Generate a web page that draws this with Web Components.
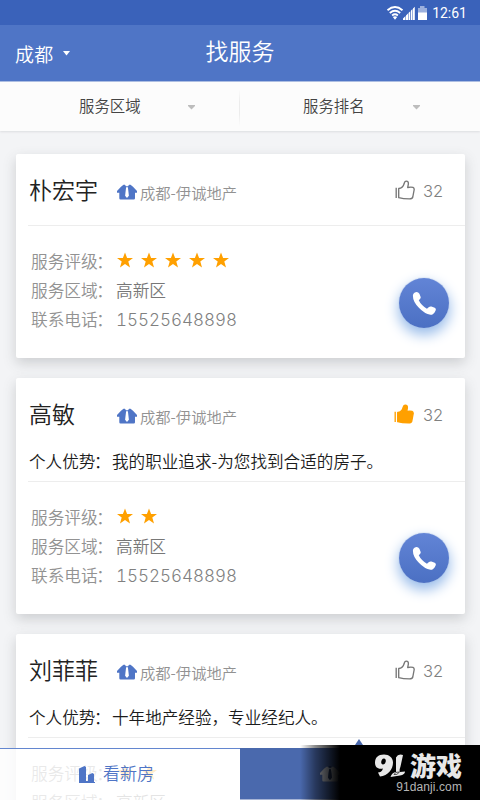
<!DOCTYPE html>
<html lang="zh-CN"><head><meta charset="utf-8"><title>找服务</title>
<style>
html,body{margin:0;height:800px;overflow:hidden}
body{font-family:"Noto Sans CJK SC",sans-serif;font-weight:350;background:#f3f4f6}
</style></head><body>
<service-app></service-app>
<script>
const define=(name,html)=>{const t=document.createElement('template');t.innerHTML=html;
customElements.define(name,class extends HTMLElement{constructor(){super();this.attachShadow({mode:'open'}).append(t.content.cloneNode(true));}});};

define('status-bar',`<style>:host{display:flex;height:25px;background:#3a62ba;color:#fff;align-items:center;justify-content:flex-end;padding-right:13px;font:400 14px/25px Roboto,sans-serif;box-sizing:border-box}svg{margin-right:5px}span{padding-top:2px}</style>
<svg width="41" height="16" viewBox="0 0 41 16"><g fill="none" stroke="#fff" stroke-width="1.900"><path d="M1.500 5.200Q9 -1 16.500 5.200"/><path d="M3.800 7.900Q9 3.700 14.200 7.900"/><path d="M6.100 10.400Q9 8.200 11.900 10.400"/></g><path d="M6.800 12Q9 10.500 11.200 12L9 14.700Z" fill="#fff"/><path d="M17 15V13.500L19.500 11V15ZM20 15V10.500L22 8.500V15ZM22.500 15V8L24.300 6.200V15ZM25 15V5.500L26.500 4V15ZM27 15V3.500L28.800 1.700V15Z" fill="#fff"/><path d="M32 3h2V1h4.500v2h2.500v12h-9z" fill="#9cb0dd"/><path d="M32 7.500h9v7.500h-9z" fill="#fff"/></svg><span>12:61</span>`);

define('title-bar',`<style>:host{display:grid;grid-template-columns:1fr 1fr 1fr;height:57px;background:#4f75c6;color:#fff;border-bottom:1px solid #a9bce2;box-sizing:border-box}
.c{display:flex;align-items:center;padding-left:15px;font-size:19px;letter-spacing:.2px;gap:10px}.t{font-size:23px;text-align:center;line-height:50px}</style>
<div class="c"><slot name="city"></slot><svg width="7" height="5"><path d="M0 0H7L3.500 4.500Z" fill="#fff"/></svg></div><div class="t"><slot></slot></div>`);

define('filter-item',`<style>:host{display:flex;align-items:center;justify-content:space-between;padding:0 44px 4px 79px;font-size:15.400px;color:#444}svg{margin-top:5px}</style><slot></slot><svg width="7" height="5"><path d="M0 0H7V1L3.500 4.500L0 1Z" fill="#bdbdbd"/></svg>`);
define('filter-bar',`<style>:host{display:grid;grid-template-columns:239px 1px 224px;height:49px;background:#fcfcfc;box-shadow:0 1px 2px #dcdde0}i{background:linear-gradient(#fcfcfc 15%,#ececec 40%,#ececec 65%,#fcfcfc 90%)}.b{padding-left:63px;padding-right:44px}</style><filter-item>服务区域</filter-item><i></i><filter-item class="b">服务排名</filter-item>`);

define('agency-icon',`<style>:host{display:block;width:20px;height:16px;color:#4f75c6}svg{display:block}path+path{fill:var(--tie,none)}</style><svg width="20" height="16" viewBox="0 0 20 16"><path fill-rule="evenodd" d="M6.500 .8H7.900L9 2.200H11L12.100 .8H13.500L16 2.800 20 7V8.800H18V14.300Q18 15.500 16.800 15.500H3.500Q2.300 15.500 2.300 14.300V8.800H0V7L4 2.800ZM9.100 3.200L8.100 11.700 10 13.900 11.900 11.700 10.900 3.200Z" fill="currentColor"/><path d="M9.100 3.200L8.100 11.700 10 13.900 11.900 11.700 10.900 3.200ZM8.600 .3H11.400L10.800 1.600H9.200Z"/></svg>`);
define('like-icon',`<style>:host{display:block;width:20px;height:20px}svg{display:block;fill:none;stroke:#777}:host([on]) svg{fill:#ffa000;stroke:#ffa000}:host([on]){margin-left:-1px}</style><svg width="20" height="20" viewBox="0 0 20 20" stroke-width="1.350" stroke-linejoin="round"><path d="M1.200 7.700V18"/><path d="M3.700 8.500Q7.800 8.300 9.200 3.500Q9.600 1.100 11.300 1.100Q13.700 1.100 13.300 4.300L12.700 7.500Q16 6.700 18 7.400Q19.500 8.100 19.100 10L17.800 17Q17.400 18.800 14.500 18.900Q8 18.900 3.700 17.700Z"/></svg>`);
define('star-icon',`<style>:host{display:block;width:24px;height:17px}svg{display:block}</style><svg width="17" height="17" viewBox="0 0 17 17"><path d="M9 .5L11.100 5.900H17L12.300 9.500 14 15.500 9 12.100 4 15.500 5.700 9.500 1 5.900H6.900Z" fill="#ffa000"/></svg>`);
define('call-button',`<style>:host{display:flex;width:50px;height:50px;border-radius:50%;align-items:center;justify-content:center;background:linear-gradient(#6284d6,#4b70c3);box-shadow:0 6px 13px 1px #9abdea,0 0 1px #5276c5;box-sizing:border-box}</style><svg width="24" height="24" viewBox="2.300 2.300 18.800 18.800"><path d="M4.200 3.600Q6.800 2.400 8.100 4.500L9.100 7Q9.400 8.200 7.600 9.500Q9.400 13.300 14 16.200L15.600 14.800Q16.500 14.200 17.500 14.500L20.100 15.400Q21.400 16 20.800 17.500Q19.300 21 16.800 21Q12.200 20.300 7.700 15.500Q3 10.800 3 6.100Q3 4.500 4.200 3.600Z" fill="#fff"/></svg>`);

define('info-row',`<style>:host{display:grid;grid-template-columns:85px 1fr;height:29px;align-items:center;font-size:16.700px;color:#777}.l{color:#929292;white-space:nowrap}.l i{font-style:normal;margin-left:-1.500px}.v{display:flex}::slotted(.num){font:300 17px/26px Inter,sans-serif;font-feature-settings:"tnum";color:#808080;padding-top:3px}</style><span class="l"><slot name="label"></slot><i>：</i></span><span class="v"><slot></slot></span>`);

customElements.define('agent-card',class extends HTMLElement{connectedCallback(){
const s=this.attachShadow({mode:'open'}),a=n=>this.getAttribute(n);
s.innerHTML=`<style>:host{display:block;box-sizing:border-box;background:#fff;border-radius:2px;box-shadow:0 5px 13px rgba(70,72,78,.22)}
.head{display:grid;grid-template-columns:88px 20px 1fr 20px 50px;height:71px;padding-left:13px;align-items:center}
.name{font-size:23px;color:#222;white-space:nowrap;padding-bottom:2px}.agency{font-size:15.300px;color:#929292;padding:5px 0 0 3px}agency-icon{margin-top:5px}
.n{font:300 16.500px Inter,sans-serif;color:#808080;padding:2px 0 0 8px}
.adv{height:32px;line-height:25px;font-size:16.600px;color:#1c1c1c;padding-left:13px;white-space:nowrap}.adv i{font-style:normal;margin:0 1.500px 0 -1.500px}
.rule{height:1px;background:#ededed;margin-left:12px}
.body{display:flex;justify-content:space-between;padding:20px 16px 0 15px}.rows{width:270px}call-button{margin-top:${a('text')?31:32}px}</style>
<div class="head"><span class="name">${a('name')}</span><agency-icon></agency-icon><span class="agency">成都-伊诚地产</span><like-icon ${this.hasAttribute('liked')?'on':''}></like-icon><span class="n">32</span></div>
${a('text')?`<div class="adv">个人优势<i>：</i>${a('text')}</div>`:''}<div class="rule"></div>
<div class="body"><div class="rows"><info-row><span slot="label">服务评级</span>${'<star-icon></star-icon>'.repeat(+a('stars'))}</info-row><info-row><span slot="label">服务区域</span><span>高新区</span></info-row><info-row><span slot="label">联系电话</span><span class="num">15525648898</span></info-row></div><call-button></call-button></div>`;}});

define('bottom-tabs',`<style>:host{display:grid;grid-template-columns:1fr 1fr;height:52px;box-sizing:border-box}
.a{display:flex;align-items:center;padding-left:79px;gap:8px;border-top:1px solid #6386cf;background:rgba(255,255,255,.8);color:#4f75c6;font-size:17px}.a span{padding-bottom:4px}
.b{position:relative;background:#4a69ad;border-bottom:1px solid #a7b5d6;display:flex;align-items:center;padding-left:80px}.b::before{content:"";position:absolute;left:113px;top:-9px;border:solid transparent;border-width:0 6.500px 9px;border-bottom-color:#4a69ad;border-top:0}agency-icon{color:#c7ccd6;--tie:#26375c}</style>
<div class="a"><svg width="16" height="17" viewBox="0 0 16 17"><path d="M0 2.500L5.500 0 7 1V15H9V9L13.500 7 15 8V16H16V17H0Z" fill="#4f75c6"/></svg><span>看新房</span></div><div class="b"><agency-icon></agency-icon></div>`);

define('site-mark',`<style>:host{display:flex;flex-direction:column;align-items:flex-end;box-sizing:border-box;width:180px;height:55px;padding:8px 18px 0 0;background:linear-gradient(90deg,transparent 0,rgba(0,0,0,.45) 15px,#000 40px);color:#e8e8e8}.r{display:flex;height:25px;gap:4px}.r span{font:900 26px/24px "Noto Sans CJK SC",sans-serif}.u{font:12px/15px "Liberation Sans",sans-serif;color:#b5b5b5;margin-top:2px;letter-spacing:.1px}</style>
<div class="r"><svg width="31" height="25" viewBox="0 0 31 24"><path d="M9 1C3 1 0 4 0 9c0 5 3 7 8 6-1 3-3 4-5 4l2 4c8-1 13-7 13-14 0-5-4-8-9-8Zm0 4c3 0 2 6-1 6S6 5 9 5Z" fill="#e8e8e8" fill-rule="evenodd"/><path d="M21 4Q23 0 28 1.500L25.500 13Q24 17 25 18.500L30 18Q30 21 25 22L15.500 23.500Q17 19 21 18.500Z" fill="#e8e8e8"/><path d="M24.500 18.500Q20 18 19 21Q22 22 24.500 18.500" fill="none" stroke="#111" stroke-width=".7"/></svg><span>游戏</span></div><div class="u">91danji.com</div>`);

define('service-app',`<style>:host{display:block;position:relative;width:480px;height:800px;overflow:hidden;background:#f3f4f6}.list{display:flex;flex-direction:column;gap:20px;padding:23px 15px 0 16px}.short{height:204px}.tall{height:236px}bottom-tabs{position:absolute;left:0;right:0;bottom:0}site-mark{position:absolute;right:0;bottom:0}</style>
<status-bar></status-bar><title-bar><span slot="city">成都</span>找服务</title-bar><filter-bar></filter-bar>
<div class="list"><agent-card class="short" name="朴宏宇" stars="5"></agent-card><agent-card class="tall" name="高敏" stars="2" liked text="我的职业追求-为您找到合适的房子。"></agent-card><agent-card class="tall" name="刘菲菲" stars="2" text="十年地产经验，专业经纪人。"></agent-card></div><bottom-tabs></bottom-tabs><site-mark></site-mark>`);
</script></body></html>
